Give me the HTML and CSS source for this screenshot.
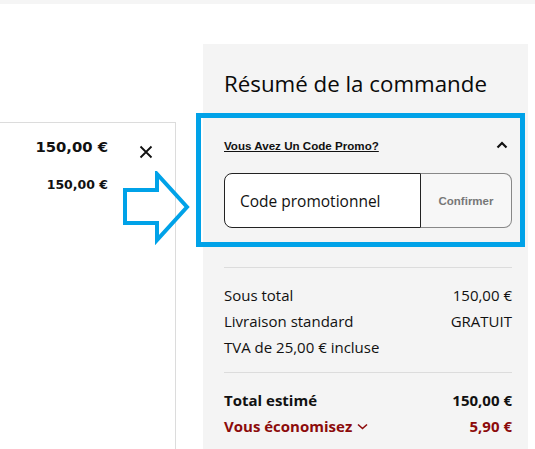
FILE: index.html
```html
<!DOCTYPE html>
<html lang="fr">
<head>
<meta charset="utf-8">
<link rel="stylesheet" href="styles.css">
</head>
<body>
<div class="topband"></div>
<div class="page">
  <div class="cart">
    <div class="item">
      <div class="item-prices">
        <div class="price-main">150,00 €</div>
        <div class="price-sub">150,00 €</div>
      </div>
      <button class="remove" aria-label="Supprimer">
        <svg width="14" height="14" viewBox="0 0 14 14"><path d="M1.5 1.5 L12.5 12.5 M12.5 1.5 L1.5 12.5" stroke="#111" stroke-width="1.8" fill="none"/></svg>
      </button>
    </div>
  </div>
  <aside class="summary">
    <h2 class="title">Résumé de la commande</h2>
    <div class="promo-head">
      <a class="promo-link" href="#">Vous Avez Un Code Promo?</a>
      <svg class="chev-up" width="12" height="8" viewBox="0 0 12 8"><path d="M1.5 6.5 L6 2 L10.5 6.5" stroke="#111" stroke-width="2.2" fill="none"/></svg>
    </div>
    <div class="promo-field">
      <div class="promo-input">Code promotionnel</div>
      <button class="promo-btn">Confirmer</button>
    </div>
    <hr class="sep sep-first">
    <div class="rows">
      <div class="row"><span>Sous total</span><span>150,00 €</span></div>
      <div class="row"><span>Livraison standard</span><span>GRATUIT</span></div>
      <div class="row"><span>TVA de 25,00 € incluse</span></div>
    </div>
    <hr class="sep sep-second">
    <div class="rows totals">
      <div class="row bold"><span>Total estimé</span><span>150,00 €</span></div>
      <div class="row bold red"><span class="save">Vous économisez <svg width="11" height="7" viewBox="0 0 11 7"><path d="M1 1.5 L5.5 5.5 L10 1.5" stroke="#8c0b0b" stroke-width="1.6" fill="none"/></svg></span><span>5,90 €</span></div>
    </div>
  </aside>
</div>
<div class="annot-box"></div>
<svg class="annot-arrow" width="70" height="76" viewBox="0 0 70 76"><path d="M3 19 L35 19 L35 3 L65 36 L35 69 L35 52 L3 52 Z" stroke="#00a2e8" stroke-width="4" fill="none" stroke-linejoin="miter"/></svg>
</body>
</html>
```
FILE: styles.css
```css
html, body {
  margin: 0;
  padding: 0;
  background: #fff;
  width: 535px;
  height: 449px;
  overflow: hidden;
  font-family: "Open Sans", "Noto Sans", sans-serif;
  color: #111;
}
.topband {
  height: 4px;
  background: #f5f5f5;
}
.page {
  display: flex;
  align-items: flex-start;
  height: 445px;
}
.cart {
  margin-top: 118px;
  margin-left: -1px;
  width: 177px;
  height: 340px;
  border: 1px solid #dcdcdc;
  box-sizing: border-box;
}
.item {
  display: flex;
  justify-content: flex-end;
  padding: 12px 22px 0 0;
}
.item-prices {
  text-align: right;
}
.price-main {
  font-family: "DejaVu Sans", sans-serif;
  font-weight: bold;
  font-size: 14.8px;
  line-height: 24px;
}
.price-sub {
  font-family: "DejaVu Sans", sans-serif;
  font-weight: bold;
  font-size: 12.5px;
  line-height: 20px;
  margin-top: 16px;
}
.remove {
  background: none;
  border: 0;
  padding: 0;
  margin: 10px 0 0 31px;
  width: 14px;
  height: 14px;
  display: block;
}
.remove svg { display: block; }
.summary {
  margin-top: 40px;
  margin-left: 27px;
  width: 325px;
  height: 405px;
  background: #f4f4f4;
  box-sizing: border-box;
  padding: 0 16px 0 21px;
}
.title {
  margin: 25px 0 0;
  font-size: 22.3px;
  line-height: 30px;
  font-weight: 500;
  color: #0a0a0a;
}
.promo-head {
  margin-top: 38px;
  height: 16px;
  display: flex;
  align-items: center;
  justify-content: space-between;
}
.promo-link {
  font-family: "Liberation Sans", Arial, sans-serif;
  font-weight: bold;
  font-size: 11.6px;
  color: #111;
  text-decoration: underline;
}
.chev-up {
  margin-right: 4px;
  display: block;
}
.promo-field {
  margin-top: 20px;
  height: 55px;
  display: flex;
}
.promo-input {
  flex: 1;
  border: 1px solid #222;
  border-radius: 8px 0 0 8px;
  background: #fff;
  display: flex;
  align-items: center;
  padding-left: 15px;
  font-size: 15.5px;
  color: #111;
}
.promo-btn {
  width: 91px;
  border: 1px solid #888;
  border-left: 0;
  border-radius: 0 8px 8px 0;
  background: #f7f7f7;
  font-family: "Liberation Sans", Arial, sans-serif;
  font-weight: bold;
  font-size: 11.5px;
  color: #777;
  padding: 0;
}
.sep {
  border: 0;
  height: 1px;
  background: #dcdcdc;
  margin: 0;
}
.sep-first { margin-top: 39px; }
.sep-second { margin-top: 12px; }
.rows { margin-top: 14px; }
.row {
  display: flex;
  justify-content: space-between;
  font-size: 15px;
  line-height: 26px;
}
.bold { font-weight: 700; }
.red { color: #8c0b0b; }
.save {
  display: inline-flex;
  align-items: center;
  gap: 5px;
}
.save svg { display: block; }
.annot-box {
  position: absolute;
  left: 196px;
  top: 113px;
  width: 329px;
  height: 134px;
  border: 5px solid #00a2e8;
  box-sizing: border-box;
}
.annot-arrow {
  position: absolute;
  left: 122px;
  top: 171px;
}
```
